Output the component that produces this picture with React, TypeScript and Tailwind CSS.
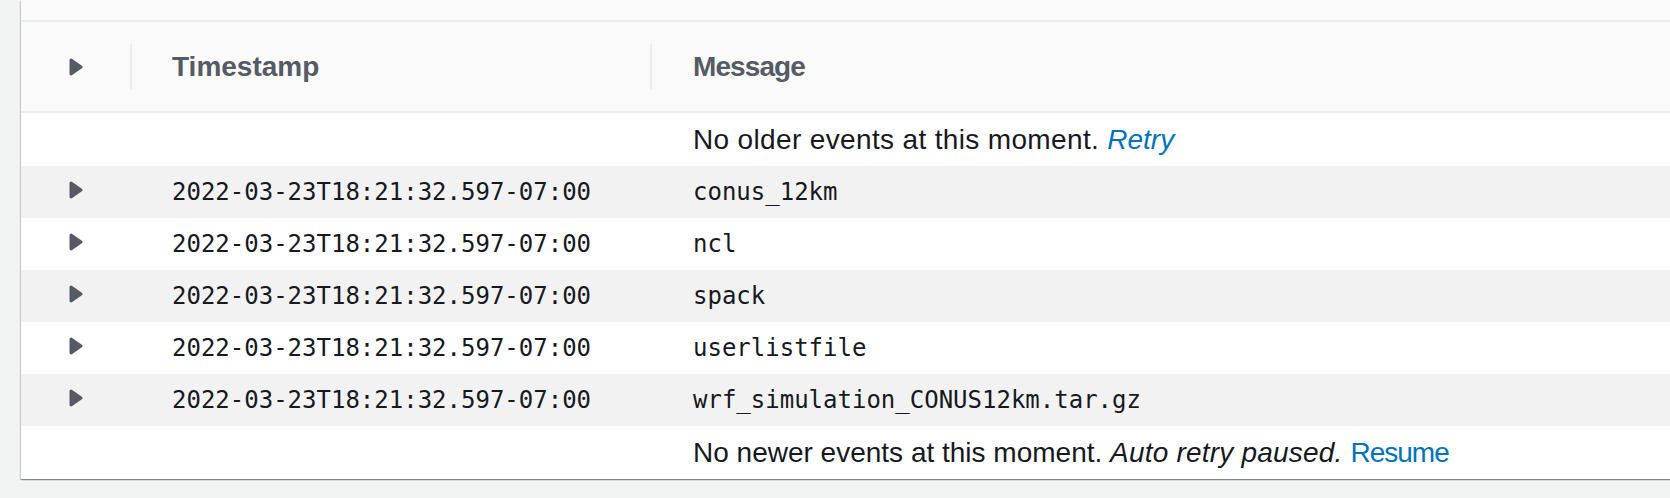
import React from 'react'

const SANS = "font-['Liberation_Sans',Arial,sans-serif]"
const MONO = "font-['DejaVu_Sans_Mono',monospace]"

const events = [
  { ts: '2022-03-23T18:21:32.597-07:00', msg: 'conus_12km' },
  { ts: '2022-03-23T18:21:32.597-07:00', msg: 'ncl' },
  { ts: '2022-03-23T18:21:32.597-07:00', msg: 'spack' },
  { ts: '2022-03-23T18:21:32.597-07:00', msg: 'userlistfile' },
  { ts: '2022-03-23T18:21:32.597-07:00', msg: 'wrf_simulation_CONUS12km.tar.gz' },
]

function Caret({ className = '' }: { className?: string }) {
  return (
    <svg width="14" height="18" viewBox="0 0 14 18" className={className}>
      <polygon
        points="2,2 12,9 2,16"
        fill="#545b64"
        stroke="#545b64"
        strokeWidth="3"
        strokeLinejoin="round"
      />
    </svg>
  )
}

function InfoRow({ children }: { children: React.ReactNode }) {
  return (
    <div className="grid grid-cols-[109px_520px_1fr] h-[53px] bg-white">
      <div />
      <div />
      <div className={`flex items-center border-l-2 border-transparent pl-[41px] text-[28px] text-[#16191f] ${SANS}`}>
        {children}
      </div>
    </div>
  )
}

export default function App() {
  return (
    <div className="w-[1670px] h-[498px] bg-[#f2f3f3] overflow-hidden">
      <div className="ml-[21px] w-[1680px] bg-white shadow-[0_1px_1px_0_rgba(0,28,36,0.3),1px_1px_1px_0_rgba(0,28,36,0.15),-1px_1px_1px_0_rgba(0,28,36,0.15)]">
        {/* top strip */}
        <div className="h-[22px] bg-[#fafafa] border-b-2 border-[#eaeded]" />

        {/* header */}
        <div className="grid grid-cols-[109px_520px_1fr] h-[91px] bg-[#fafafa] border-b-2 border-[#eaeded]">
          <div className="flex items-center pl-[48px]">
            <Caret />
          </div>
          <div className="flex items-center">
            <div className={`flex items-center h-[45px] border-l-2 border-[#eaeded] pl-10 text-[28px] font-bold text-[#545b64] ${SANS}`}>
              Timestamp
            </div>
          </div>
          <div className="flex items-center">
            <div className={`flex items-center h-[45px] border-l-2 border-[#eaeded] pl-[41px] text-[28px] font-bold tracking-[-0.9px] text-[#545b64] ${SANS}`}>
              Message
            </div>
          </div>
        </div>

        <InfoRow>
          <span className="tracking-[0.35px]">No older events at this moment.&nbsp;</span>
          <span className="italic text-[#0073bb]">Retry</span>
        </InfoRow>

        {events.map((e, i) => (
          <div
            key={i}
            className={`grid grid-cols-[109px_520px_1fr] h-[52px] ${i % 2 === 0 ? 'bg-[#f2f2f2]' : 'bg-white'}`}
          >
            <div className="flex items-center pl-[48px]">
              <Caret className="mb-[5px]" />
            </div>
            <div className={`flex items-center border-l-2 border-transparent pl-10 text-[24px] text-[#16191f] ${MONO}`}>
              {e.ts}
            </div>
            <div className={`flex items-center border-l-2 border-transparent pl-[41px] text-[24px] text-[#16191f] ${MONO}`}>
              {e.msg}
            </div>
          </div>
        ))}

        <InfoRow>
          <span>No newer events at this moment.&nbsp;</span>
          <span className="italic tracking-[0.2px]">Auto retry paused.&nbsp;</span>
          <span className="tracking-[-1px] text-[#0073bb]">Resume</span>
        </InfoRow>
      </div>
    </div>
  )
}
